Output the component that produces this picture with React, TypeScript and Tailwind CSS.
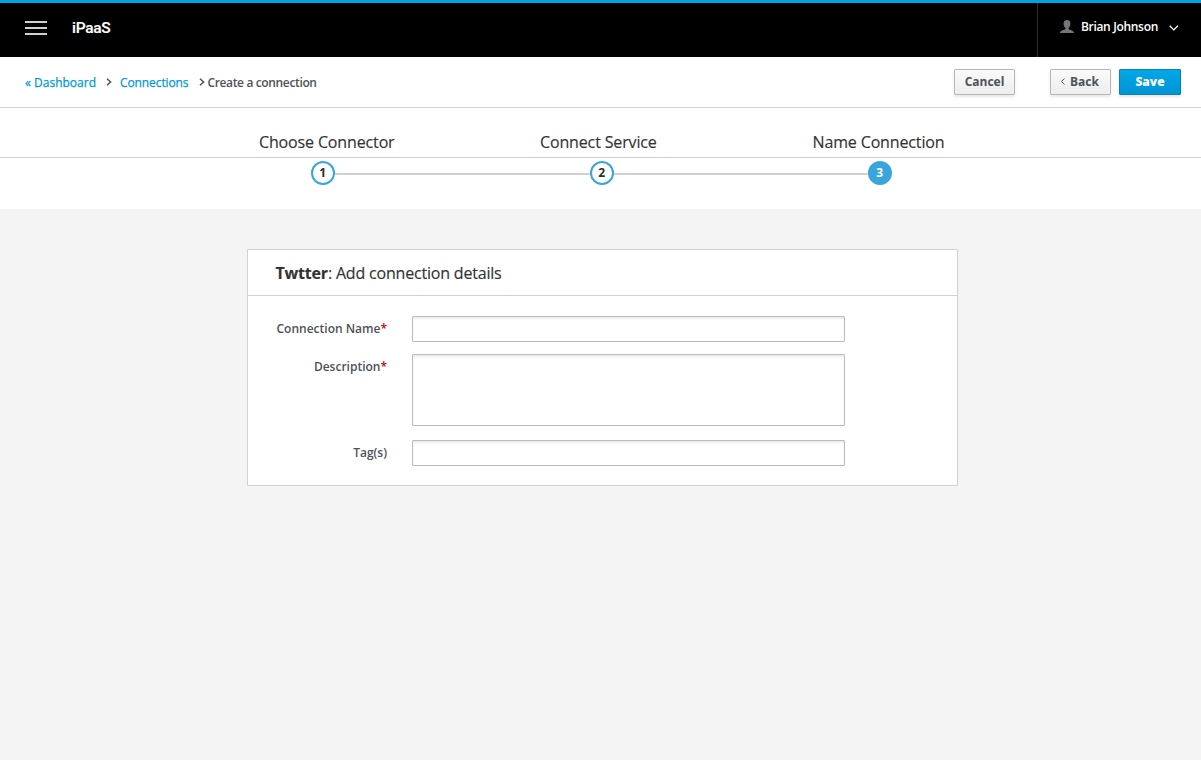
import React from "react";

function Chevron({ d, w, h, color, stroke = 1.5 }: { d: string; w: number; h: number; color: string; stroke?: number }) {
  return (
    <svg width={w} height={h} viewBox={`0 0 ${w} ${h}`} fill="none" stroke={color} strokeWidth={stroke} className="block shrink-0">
      <path d={d} />
    </svg>
  );
}

function Header() {
  return (
    <header className="flex h-[57px] border-t-[3px] border-[#00a3e2] bg-black text-white">
      <button className="ml-[25px] mt-[18px] flex h-[14px] w-[22px] flex-col justify-between" aria-label="Menu">
        <span className="h-[2px] w-full bg-[#d1d1d1]" />
        <span className="h-[2px] w-full bg-[#d1d1d1]" />
        <span className="h-[2px] w-full bg-[#d1d1d1]" />
      </button>
      <div className="ml-[25px] mt-[15px] font-[Roboto,sans-serif] text-[15.5px] font-medium leading-[20px] tracking-[-0.3px] [-webkit-text-stroke:0.2px]">iPaaS</div>
      <div className="ml-auto flex w-[164px] border-l border-[#2e2e2e] pl-[22px]">
        <svg width="14" height="13" viewBox="0 0 14 13" className="mt-[17px] block" fill="#72767b">
          <path d="M7 0C4.700 0 3.600 1.400 3.600 3.500c0 1.900.700 3.700 1.900 4.600v1C4.500 10.200.300 10.300 0 13h14c-.300-2.700-4.500-2.800-5.500-3.900v-1c1.200-.900 1.900-2.700 1.900-4.600C10.400 1.400 9.300 0 7 0z" />
        </svg>
        <span className="ml-[7px] mt-[16px] w-[78px] whitespace-nowrap text-[12px] font-semibold leading-[16px] tracking-[-0.32px]">Brian Johnson</span>
        <span className="ml-[10px] mt-[22px]">
          <Chevron d="M.7.8 4.800 4.900 8.900.8" w={10} h={6} color="#fff" stroke={1.3} />
        </span>
      </div>
    </header>
  );
}

function Toolbar() {
  const grey = "h-[26px] w-[61px] rounded-[1px] border border-[#b7b7b7] bg-linear-to-b from-[#fafafa] to-[#ededed] text-[#4d5258] shadow-[0_2px_3px_rgba(3,3,3,0.1)]";
  return (
    <div className="flex h-[51px] border-b border-[#d1d1d1] bg-white text-[12px] leading-[16px]">
      <nav className="flex h-[50px] items-center whitespace-nowrap pl-[25px]">
        <a className="w-[71px] pt-[2px] font-medium text-[#0099d3] [-webkit-text-stroke:0.25px]">« Dashboard</a>
        <span className="ml-[10px]"><Chevron d="M1 .7 4.600 4 1 7.300" w={6} h={8} color="#4d5258" /></span>
        <a className="ml-[8px] w-[69px] pt-[2px] font-medium tracking-[-0.1px] text-[#0099d3] [-webkit-text-stroke:0.25px]">Connections</a>
        <span className="ml-[10px]"><Chevron d="M1 .7 4.600 4 1 7.300" w={6} h={8} color="#4d5258" /></span>
        <span className="ml-[2.5px] pt-[2px] font-semibold tracking-[-0.36px] text-[#4d5258]">Create a connection</span>
      </nav>
      <div className="ml-auto flex pr-[20px] pt-[12px] font-bold">
        <button className={grey}><span className="block pb-px">Cancel</span></button>
        <button className={`${grey} ml-[35px] flex items-center pb-px pl-[9px]`}>
          <Chevron d="M4.500.7 1.300 3.500 4.500 6.300" w={5} h={7} color="#4d5258" stroke={1} />
          <span className="ml-[5px]">Back</span>
        </button>
        <button className="ml-[8px] h-[26px] w-[62px] rounded-[1px] border border-[#0e80ad] bg-linear-to-b from-[#00a8e8] to-[#0094d4] text-white shadow-[0_2px_3px_rgba(3,3,3,0.1)]"><span className="block font-extrabold">Save</span></button>
      </div>
    </div>
  );
}

function Step({ n, active = false }: { n: number; active?: boolean }) {
  return (
    <span className={`flex h-[24.5px] w-[24.5px] shrink-0 items-center justify-center rounded-full border-2 border-[#39a5dc] text-[12px] font-bold leading-[16px] ${active ? "bg-[#39a5dc] text-white" : "bg-white text-[#292e34]"}`}><span className="pt-px">{n}</span></span>
  );
}

function Stepper() {
  return (
    <div className="h-[101px] bg-white">
      <div className="flex h-[50px] items-start whitespace-nowrap border-b border-[#d1d1d1] pl-[259px] pt-[23px] text-[16px] leading-[22px] tracking-[-0.14px] text-[#333] [-webkit-text-stroke:0.15px]">
        <span className="w-[281px]">Choose Connector</span>
        <span className="w-[272.500px]">Connect Service</span>
        <span>Name Connection</span>
      </div>
      <div className="flex items-center pl-[310.500px] pt-[2.500px]">
        <Step n={1} />
        <span className="mt-[1.500px] h-[2px] w-[254.500px] bg-[#d1d1d1]" />
        <Step n={2} />
        <span className="mt-[1.500px] h-[2px] w-[253.500px] bg-[#d1d1d1]" />
        <Step n={3} active />
      </div>
    </div>
  );
}

function Label({ text, required = false }: { text: string; required?: boolean }) {
  return (
    <label className="mr-[25px] w-[139px] whitespace-nowrap pt-[5px] text-right text-[12px] font-semibold leading-[16px] text-[#4d5258]">
      {text}
      {required && <span className="text-[#c00]">*</span>}
    </label>
  );
}

function Details() {
  const field = "block w-[433px] resize-none rounded-[1px] border border-[#bbb] bg-white px-2 text-[12px] shadow-[inset_0_2px_2px_rgba(3,3,3,0.08)] outline-none";
  return (
    <section className="ml-[247px] mt-[40px] h-[237px] w-[711px] rounded-[1px] border border-[#d1d1d1] bg-white">
      <h2 className="flex h-[46px] items-center whitespace-pre border-b border-[#d1d1d1] pl-[27.500px] text-[16px] leading-[22px] tracking-[-0.19px] text-[#333] [-webkit-text-stroke:0.15px]"><b>Twtter</b>: Add connection details</h2>
      <form className="pt-[20px]">
        <div className="flex h-[38px]"><Label text="Connection Name" required /><input className={`${field} h-[26px]`} /></div>
        <div className="flex h-[86px]"><Label text="Description" required /><textarea className={`${field} h-[72px]`} /></div>
        <div className="flex"><Label text="Tag(s)" /><input className={`${field} h-[26px]`} /></div>
      </form>
    </section>
  );
}

export default function App() {
  return (
    <div className="flex h-screen w-full flex-col overflow-hidden bg-[#f4f4f4] font-['Open_Sans',sans-serif]">
      <Header />
      <Toolbar />
      <Stepper />
      <Details />
    </div>
  );
}
